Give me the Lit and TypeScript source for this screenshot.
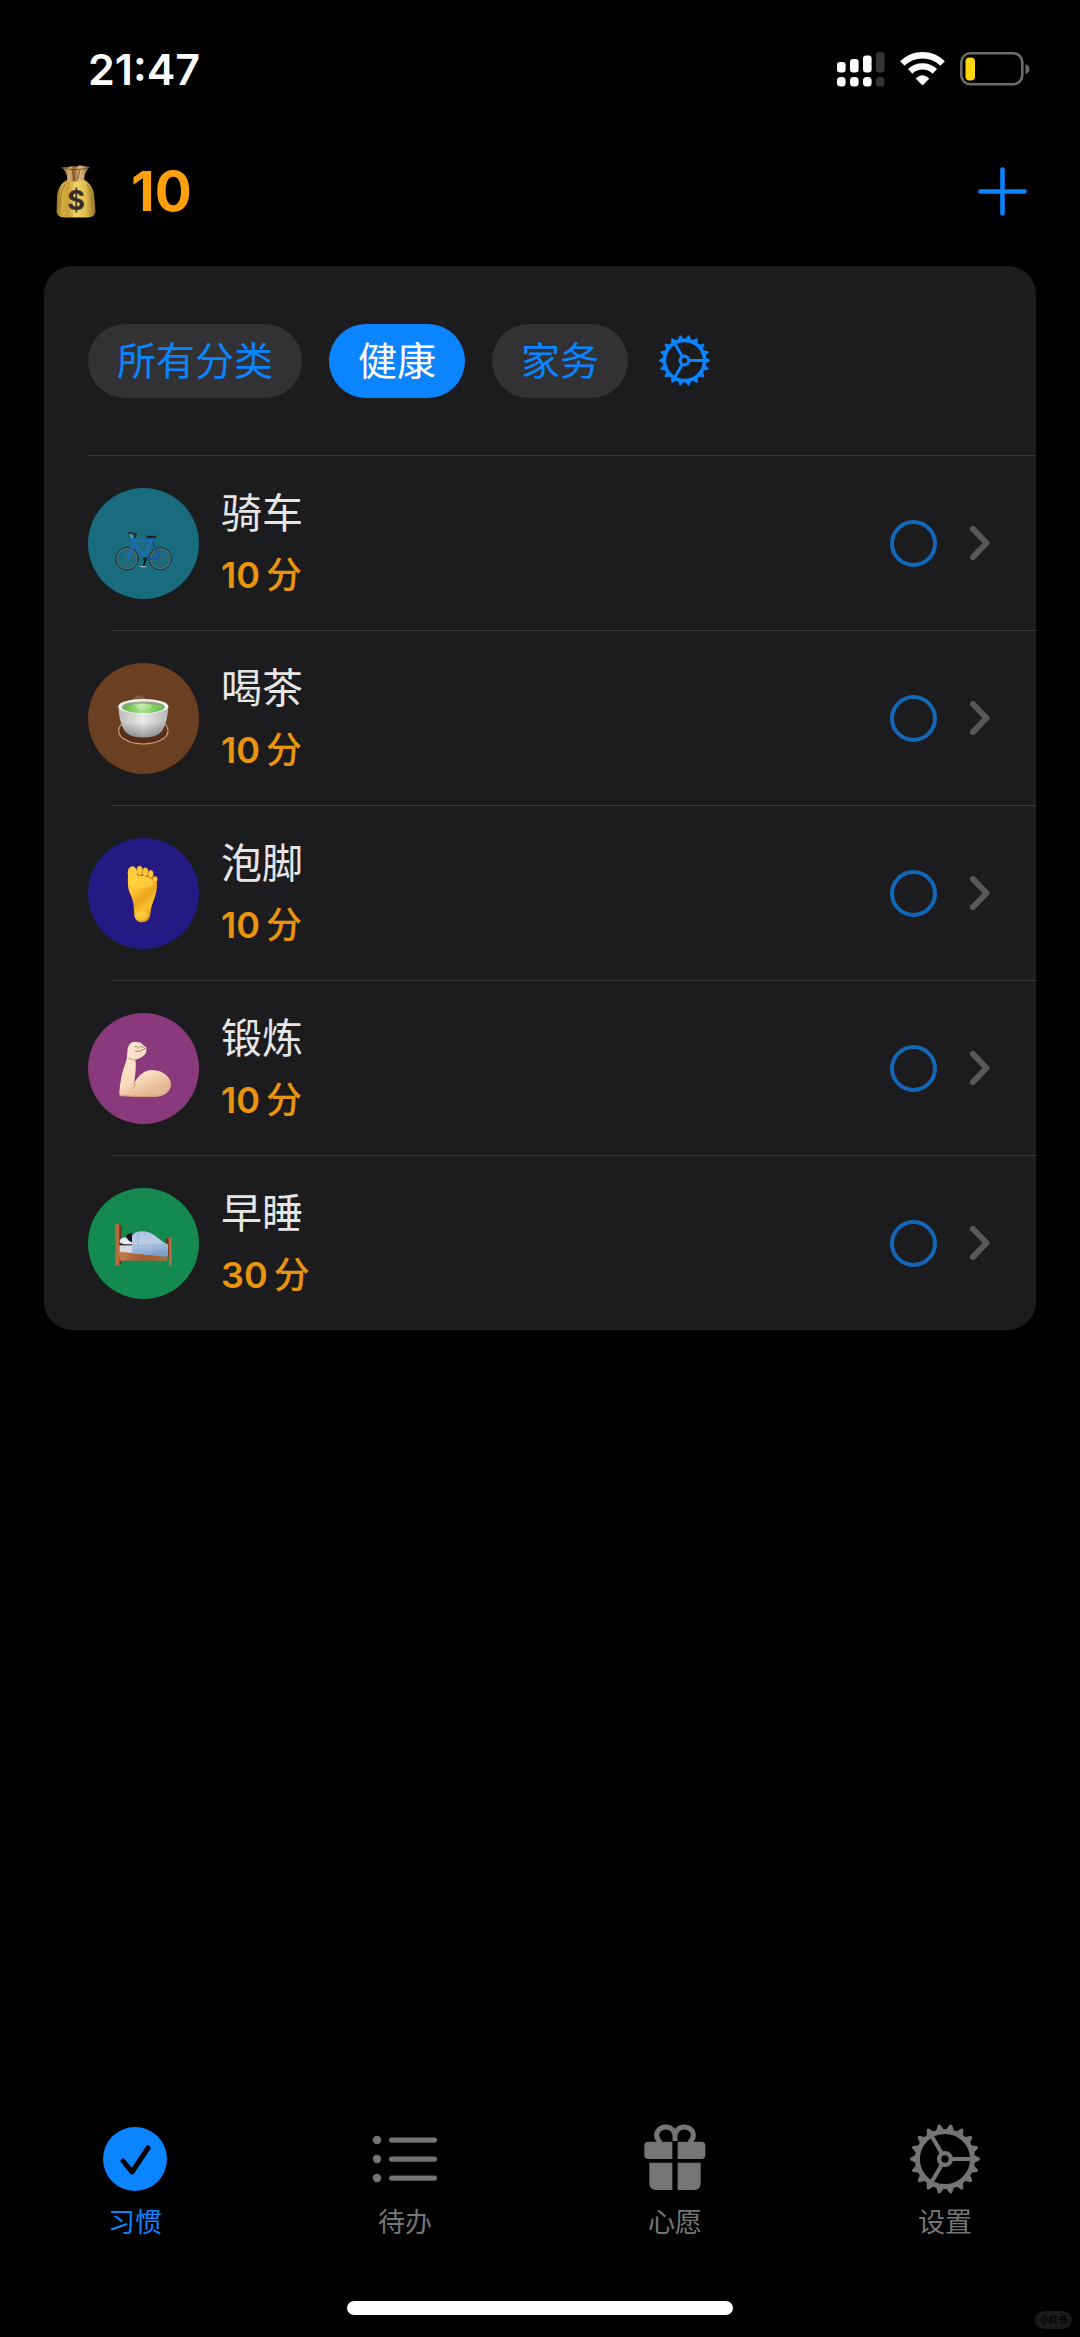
import { LitElement, html, svg, css } from "lit";
import { customElement, property, state } from "lit/decorators.js";

const bike = svg`
  <g fill="none" stroke-linecap="round" stroke-linejoin="round">
    <g stroke="#3d6470" stroke-width="1">
      <path d="M203 237V301M171 269H235M180 246L226 292M226 246L180 292M191 239L215 299M233 257L173 281"/>
      <path d="M303 237V301M271 269H335M280 246L326 292M326 246L280 292M291 239L315 299M333 257L273 281"/>
    </g>
    <g stroke="#7d786e" stroke-width="3"><circle cx="203" cy="269" r="31"/><circle cx="303" cy="269" r="31"/></g>
    <g stroke="#20262a" stroke-width="3"><circle cx="203" cy="269" r="33.5"/><circle cx="303" cy="269" r="33.5"/></g>
    <path d="M274 210L303 268L257 270" stroke="#1a4da8" stroke-width="4"/>
    <path d="M217 203L223 224L205 268M222 216H278M223 224L256 262M275 212L256 266" stroke="#1f6ad0" stroke-width="5"/>
    <path d="M218 205L215 194" stroke="#9fb0b8" stroke-width="4"/>
    <path d="M209 191L231 196M231 196L226 203" stroke="#272727" stroke-width="5"/>
    <path d="M264 203L288 203" stroke="#1d1d1d" stroke-width="6"/>
    <path d="M260 268L253 291" stroke="#17191b" stroke-width="5"/>
    <path d="M245 293H259" stroke="#aab5b8" stroke-width="4"/>
  </g>
  <circle cx="257" cy="270" r="6" fill="#22272a"/>
  <circle cx="203" cy="269" r="3" fill="#55646a"/><circle cx="303" cy="269" r="3" fill="#55646a"/>`;

const tea = svg`
  <defs>
    <linearGradient id="cup" x1="0" x2="1"><stop offset="0" stop-color="#bdbdbd"/><stop offset=".25" stop-color="#d3d3d3"/><stop offset=".5" stop-color="#ececec"/><stop offset=".75" stop-color="#d0d0d0"/><stop offset="1" stop-color="#b4b4b4"/></linearGradient>
    <linearGradient id="shade" x1="0" y1="0" x2="0" y2="1"><stop offset=".5" stop-color="#000" stop-opacity="0"/><stop offset="1" stop-color="#000" stop-opacity=".35"/></linearGradient>
    <linearGradient id="brew" x1="0" x2="1"><stop offset="0" stop-color="#62b544"/><stop offset=".45" stop-color="#a5e386"/><stop offset="1" stop-color="#67c248"/></linearGradient>
  </defs>
  <ellipse cx="252" cy="784" rx="74" ry="40" fill="#552d18" stroke="#d0a27c" stroke-width="3.5"/>
  <path d="M177 712C179 742 184 764 194 781C204 798 226 804 252 804S300 798 310 781C320 764 325 742 327 712Z" fill="url(#cup)"/>
  <path d="M177 712C179 742 184 764 194 781C204 798 226 804 252 804S300 798 310 781C320 764 325 742 327 712Z" fill="url(#shade)"/>
  <ellipse cx="252" cy="711" rx="75" ry="22" fill="#f3f3f1"/>
  <ellipse cx="252" cy="713" rx="65" ry="17" fill="#8fa382"/>
  <ellipse cx="252" cy="717" rx="60" ry="14" fill="url(#brew)"/>
  <g fill="#fff"><ellipse cx="240" cy="696" rx="20" ry="18" opacity=".14"/><ellipse cx="252" cy="712" rx="24" ry="9" opacity=".25"/></g>`;

const foot = svg`
  <defs>
    <linearGradient id="skin" x1="0" y1="0" x2=".5" y2="1"><stop offset="0" stop-color="#ffd23e"/><stop offset=".35" stop-color="#fdc630"/><stop offset=".6" stop-color="#eaa621"/><stop offset=".82" stop-color="#fbc230"/><stop offset="1" stop-color="#e29a1a"/></linearGradient>
  </defs>
  <path d="M206 220C205 250 205 266 214 284C224 304 223 322 225 345C227 359 236 366 248 366C262 366 271 358 273 342C275 308 292 290 293 256C294 236 282 228 262 226Z" fill="url(#skin)"/>
  <path d="M236 226C250 221 280 228 289 244" fill="none" stroke="#a8661a" stroke-width="4"/>
  <g fill="#ffcb3a" stroke="#c9820f" stroke-width="1.500">
    <ellipse cx="287" cy="237" rx="7" ry="9.500"/><ellipse cx="274" cy="221" rx="8" ry="11.500"/>
    <ellipse cx="258" cy="215" rx="8.500" ry="13"/><ellipse cx="241" cy="211" rx="9" ry="14"/>
  </g>
  <ellipse cx="219" cy="217" rx="14" ry="19" fill="#ffcd3c"/>
  <ellipse cx="248" cy="346" rx="17" ry="13" fill="#ffd64c" opacity=".6"/>
  <ellipse cx="247" cy="249" rx="36" ry="15" fill="#ffd246" opacity=".6"/>`;

const arm = svg`
  <defs>
    <linearGradient id="pale" x1="0" y1="0" x2=".4" y2="1"><stop offset="0" stop-color="#fbe6d0"/><stop offset=".7" stop-color="#f9dcbf"/><stop offset="1" stop-color="#e3b892"/></linearGradient>
  </defs>
  <path d="M205 745C206 733 213 724 224 722L236 724C244 725 248 728 251 732L260 739C263 745 261 752 259 757C255 766 240 773 228 777C232 802 226 826 225 846C237 824 253 807 280 807C310 808 335 827 335 852C333 872 315 887 288 887L187 886C181 886 180 880 180 874C182 842 188 810 200 782C204 768 203 757 205 745Z" fill="url(#pale)"/>
  <path d="M225 846C230 853 228 856 219 862M207 770C213 775 222 777 229 776" fill="none" stroke="#dcaf89" stroke-width="4" stroke-linecap="round"/>
  <path d="M226 738C232 733 238 737 235 743M228 750L244 751M241 737C250 735 254 741 257 744M245 748L257 744" fill="none" stroke="#8a5544" stroke-width="2" stroke-linecap="round"/>
  <path d="M183 882C220 887 280 889 304 881C322 873 331 863 333 850" fill="none" stroke="#d6a480" stroke-width="3" stroke-linecap="round"/>`;

const bed = svg`
  <defs>
    <linearGradient id="quilt" x1="0" y1="0" x2=".2" y2="1"><stop offset="0" stop-color="#a9bfe0"/><stop offset=".5" stop-color="#bccde6"/><stop offset="1" stop-color="#7e9ecb"/></linearGradient>
    <linearGradient id="wood" x1="0" x2="1"><stop offset="0" stop-color="#c27a4a"/><stop offset=".5" stop-color="#a05c33"/><stop offset="1" stop-color="#b56a3c"/></linearGradient>
  </defs>
  <path d="M174 246L187 254V368H179L174 350Z" fill="#6b3519"/>
  <path d="M318 294L330 288V350H318Z" fill="#6b3519"/>
  <path d="M180 310H326V342H180Z" fill="#d5dae2"/>
  <path d="M180 305H222V312H180Z" fill="#25201f"/>
  <path d="M180 331L218 335L324 347V358H180Z" fill="url(#wood)"/>
  <path d="M182 304C178 291 192 286 208 289L222 296V308C206 310 190 309 182 304Z" fill="#e6ecf5"/>
  <path d="M200 287C203 277 212 274 221 277V304C213 303 206 297 200 287Z" fill="#16161a"/>
  <path d="M218 282C230 266 262 267 283 280C298 290 308 303 326 309V346C290 344 250 339 218 335Z" fill="url(#quilt)"/>
  <path d="M236 276C235 296 236 316 236 336M219 311C255 314 300 312 326 309" fill="none" stroke="#8ba7d0" stroke-width="2"/>
  <path d="M168 248L176 246L180 250V373H168Z" fill="#b46c40"/>
  <path d="M328 289L337 287V374H329Z" fill="#b46c40"/>`;

interface Habit {
  name: string;
  points: number;
  color: string;
  box: string;
  art: unknown;
}

const habits: Habit[] = [
  { name: "骑车", points: 10, color: "#186c7d", box: "86 57 333 333", art: bike },
  { name: "喝茶", points: 10, color: "#6b3f22", box: "86 581 333 333", art: tea },
  { name: "泡脚", points: 10, color: "#251a84", box: "86 113 333 333", art: foot },
  { name: "锻炼", points: 10, color: "#8a3a7c", box: "86 636 333 333", art: arm },
  { name: "早睡", points: 30, color: "#158a50", box: "86 140 333 333", art: bed },
];

const categories = ["所有分类", "健康", "家务"];

const teeth = Array.from({ length: 18 }, (_, i) => i * 20);

const gear = svg`
  <g fill="none" stroke="currentColor">
    <circle r="82" stroke-width="15"/>
    <circle r="17.5" stroke-width="13"/>
    ${[0, 120, 240].map((a) => svg`<path d="M22 0H80" stroke-width="12" transform="rotate(${a})"/>`)}
  </g>
  ${teeth.map(
    (a) => svg`<path d="M86-12L100-5Q104-4 104 0Q104 4 100 5L86 12Z" fill="currentColor" transform="rotate(${a})"/>`
  )}`;

const gearIcon = (cls: string) =>
  html`<svg class=${cls} viewBox="-104 -104 208 208" aria-hidden="true">${gear}</svg>`;

const tabs = [
  {
    label: "习惯",
    icon: html`<svg class="tab-icon" viewBox="0 0 70 70" aria-hidden="true">
      <circle cx="35" cy="35" r="32" fill="currentColor"/>
      <path d="M23 37L32 48L48 24" fill="none" stroke="#000" stroke-width="5" stroke-linecap="round" stroke-linejoin="round"/>
    </svg>`,
  },
  {
    label: "待办",
    icon: html`<svg class="tab-icon" viewBox="0 0 70 70" aria-hidden="true">
      <g fill="currentColor">
        <circle cx="7" cy="16" r="4.2"/><circle cx="7" cy="35" r="4.2"/><circle cx="7" cy="54" r="4.2"/>
        <rect x="19" y="13.4" width="48" height="5.4" rx="2.7"/><rect x="19" y="32.4" width="48" height="5.4" rx="2.7"/><rect x="19" y="51.4" width="48" height="5.4" rx="2.7"/>
      </g>
    </svg>`,
  },
  {
    label: "心愿",
    icon: html`<svg class="tab-icon" viewBox="122 72 210 210" aria-hidden="true">
      <path d="M147 125H219V177H147Q135 177 135 165V137Q135 125 147 125ZM235 125H306Q318 125 318 137V165Q318 177 306 177H235ZM150 188H219V270H170Q150 270 150 250ZM235 188H304V250Q304 270 284 270H235Z" fill="currentColor"/>
      <path d="M227 123V110C227 92 214 81 199 81S172 92 172 106C172 115 176 121 184 128M227 123V110C227 92 240 81 255 81S282 92 282 106C282 115 278 121 270 128" fill="none" stroke="currentColor" stroke-width="15"/>
    </svg>`,
  },
  { label: "设置", icon: gearIcon("tab-icon") },
];

@customElement("habit-row")
export class HabitRow extends LitElement {
  @property({ attribute: false }) habit!: Habit;

  static styles = css`
    :host { display: block; }
    .row { display: flex; align-items: center; height: 174px; padding: 0 46px 0 44px; }
    .badge { width: 111px; height: 111px; border-radius: 50%; flex: none; }
    .art { display: block; width: 100%; height: 100%; }
    .info { flex: 1; min-width: 0; margin-left: 22px; display: flex; flex-direction: column; }
    .name { color: #e6e6e7; font-size: 41px; line-height: 64px; }
    .points { color: #e9940f; font-size: 36px; line-height: 60px; font-weight: 600; display: flex; gap: 6px; }
    .unit { font-weight: 500; }
    .check { appearance: none; box-sizing: border-box; flex: none; width: 47px; height: 47px; margin: 0 33px 0 0; border: 4px solid #1267b9; border-radius: 50%; }
    .check:checked { background: #1267b9; }
    .more { flex: none; padding: 0; border: 0; background: none; color: #58585a; display: flex; }
    .chevron { width: 20px; height: 34px; }
  `;

  render() {
    const h = this.habit;
    return html`<div class="row">
      <div class="badge" style="background:${h.color}">
        <svg class="art" viewBox=${h.box} aria-hidden="true">${h.art}</svg>
      </div>
      <label class="info" for="done">
        <span class="name">${h.name}</span>
        <span class="points">${h.points}<span class="unit">分</span></span>
      </label>
      <input class="check" id="done" type="checkbox">
      <button class="more" type="button" aria-label=${h.name}>
        <svg class="chevron" viewBox="0 0 20 34" aria-hidden="true">
          <path d="M3 3L16.500 17L3 31" fill="none" stroke="currentColor" stroke-width="6" stroke-linecap="round" stroke-linejoin="round"/>
        </svg>
      </button>
    </div>`;
  }
}

@customElement("app-root")
export class AppRoot extends LitElement {
  @state() private category = "健康";
  @state() private tab = "习惯";

  static styles = css`
    :host {
      display: flex; flex-direction: column; min-height: 100vh; position: relative;
      background: #000; color: #fff;
      font-family: Inter, "Noto Sans CJK SC", sans-serif;
    }
    button { font: inherit; border: 0; padding: 0; background: none; cursor: pointer; }
    .status { display: flex; align-items: center; justify-content: space-between; height: 137px; padding: 0 50px 0 88px; }
    .time { font-size: 43px; font-weight: 600; line-height: 50px; }
    .indicators { display: flex; align-items: center; gap: 15px; }
    .signal { width: 48px; height: 36px; }
    .wifi { width: 45px; height: 36px; }
    .battery { width: 70px; height: 36px; }
    .top { display: flex; align-items: center; justify-content: space-between; height: 108px; padding: 0 53px 0 56px; }
    .balance { display: flex; align-items: center; gap: 35px; }
    .bag { width: 40px; height: 53px; }
    .bag-sign { font: 700 27px Inter, sans-serif; }
    .coins { color: #ff9f0a; font-size: 55px; font-weight: 700; line-height: 66px; }
    .add { color: #0a84ff; display: flex; }
    .plus { width: 49px; height: 49px; }
    .card { margin: 21px 44px 0; border-radius: 28px; background: #1c1c1e; overflow: hidden; }
    .filters { display: flex; align-items: center; gap: 27px; height: 189px; padding: 0 44px; }
    .pill { height: 74px; padding: 0 29px; border-radius: 37px; background: #323234; color: #0a84ff; font-size: 39px; line-height: 74px; white-space: nowrap; }
    .pill.on { background: #0a84ff; color: #fff; }
    .manage { color: #0a84ff; display: flex; padding: 0 4px; }
    .gear { width: 51px; height: 51px; }
    .list { list-style: none; margin: 0; padding: 0; }
    .line { height: 1px; margin: 0 0 0 68px; border: 0; background: #38383a; }
    .item:first-child .line { margin-left: 44px; }
    .tabs { display: grid; grid-template-columns: repeat(4, 1fr); margin-top: auto; }
    .tab { display: flex; flex-direction: column; align-items: center; gap: 8px; color: #757575; text-decoration: none; font-size: 27px; line-height: 42px; }
    .tab.on { color: #0a84ff; }
    .tab-icon { width: 70px; height: 70px; }
    .home { align-self: center; width: 36%; max-width: 386px; height: 14px; border-radius: 7px; background: #fff; margin: 57px 0 22px; }
    .mark { position: absolute; right: 8px; bottom: 8px; padding: 0 5px; border-radius: 9px; background: #1a1a1a; color: #000; font-size: 9px; font-weight: 700; line-height: 18px; }
  `;

  render() {
    return html`
      <div class="status">
        <span class="time">21:47</span>
        <div class="indicators">
          <svg class="signal" viewBox="0 0 48 36" aria-hidden="true">
            <g fill="#fff">
              <rect x="0" y="11" width="8.600" height="10.500" rx="3"/><rect x="13" y="8" width="8.600" height="13.500" rx="3"/><rect x="26" y="4.500" width="8.600" height="17" rx="3"/>
              <rect x="0" y="26" width="8.600" height="9.500" rx="3.500"/><rect x="13" y="26" width="8.600" height="9.500" rx="3.500"/><rect x="26" y="26" width="8.600" height="9.500" rx="3.500"/>
            </g>
            <g fill="#343434"><rect x="39" y="1" width="8.600" height="20.500" rx="3"/><rect x="39" y="26" width="8.600" height="9.500" rx="3.500"/></g>
          </svg>
          <svg class="wifi" viewBox="0 0 45 36" aria-hidden="true">
            <g fill="none" stroke="#fff" stroke-width="6.4">
              <path d="M2.4 12.6A28.5 28.5 0 0 1 42.6 12.6"/>
              <path d="M10.2 20.4A17.5 17.5 0 0 1 34.8 20.4"/>
            </g>
            <path d="M22.5 34L16.2 27.6Q22.5 21.8 28.8 27.6Z" fill="#fff" stroke="#fff" stroke-linejoin="round"/>
          </svg>
          <svg class="battery" viewBox="0 0 70 36" aria-hidden="true">
            <rect x="1.3" y="2.2" width="61" height="31" rx="9" fill="none" stroke="#6c6c6e" stroke-width="2.6"/>
            <path d="M65.5 13Q69.5 14.500 69.5 18T65.5 23Z" fill="#6c6c6e"/>
            <rect x="5.5" y="6.500" width="9.5" height="23" rx="4" fill="#ffd60a"/>
          </svg>
        </div>
      </div>

      <header class="top">
        <div class="balance">
          <svg class="bag" viewBox="0 0 40 53" aria-hidden="true">
            <defs>
              <linearGradient id="cloth" x1="0" x2="1"><stop offset="0" stop-color="#9a7424"/><stop offset=".15" stop-color="#d2ac42"/><stop offset=".3" stop-color="#c9a23a"/><stop offset=".5" stop-color="#f0d566"/><stop offset=".75" stop-color="#dfbd4b"/><stop offset="1" stop-color="#917028"/></linearGradient>
              <linearGradient id="neck" x1="0" x2="1"><stop offset="0" stop-color="#8a6030"/><stop offset=".3" stop-color="#d9b071"/><stop offset=".45" stop-color="#8d5f2a"/><stop offset=".65" stop-color="#e2bd7d"/><stop offset="1" stop-color="#8c6333"/></linearGradient>
            </defs>
            <path d="M11 15C3 19 1 27 1 34L.5 46Q1 52.5 8 52.5H32Q39 52.5 39.5 46L38.500 34C38.500 27 36 19 28.500 15Z" fill="url(#cloth)"/>
            <path d="M5.500 2.500C10 2 12 3 14 1.500C18 .5 20 2.500 23 .5C26 0 30 2 33.500 2C30 6 28 10 28.500 15C23 17 16 17 11 15C12 10 9 5 5.500 2.500Z" fill="url(#neck)"/>
            <path d="M7 3C12 5 26 5 32 3M16 4L18 14M24 4L22 14" fill="none" stroke="#6e4a20" stroke-width=".8"/>
            <path d="M9 19Q4 27 4 42M31 19Q36 27 36 42" fill="none" stroke="#98741f" stroke-width="1" opacity=".7"/>
            <text class="bag-sign" x="20" y="45" text-anchor="middle" fill="#3a2b28">$</text>
          </svg>
          <span class="coins">10</span>
        </div>
        <button class="add" type="button" aria-label="+">
          <svg class="plus" viewBox="0 0 49 49" aria-hidden="true">
            <path d="M24.500 2.500V46.500M2.500 24.500H46.500" stroke="currentColor" stroke-width="4.600" stroke-linecap="round"/>
          </svg>
        </button>
      </header>

      <main class="card">
        <div class="filters">
          ${categories.map(
            (c) => html`<button type="button" class="pill ${c === this.category ? "on" : ""}" @click=${() => (this.category = c)}>${c}</button>`
          )}
          <button class="manage" type="button" aria-label="设置">${gearIcon("gear")}</button>
        </div>
        <ul class="list">
          ${habits.map(
            (h) => html`<li class="item"><hr class="line"><habit-row .habit=${h}></habit-row></li>`
          )}
        </ul>
      </main>

      <nav class="tabs">
        ${tabs.map(
          (t) => html`<a href="#" class="tab ${t.label === this.tab ? "on" : ""}" @click=${(e: Event) => {
            e.preventDefault();
            this.tab = t.label;
          }}>${t.icon}<span>${t.label}</span></a>`
        )}
      </nav>
      <div class="home"></div>
      <span class="mark">小红书</span>
    `;
  }
}
